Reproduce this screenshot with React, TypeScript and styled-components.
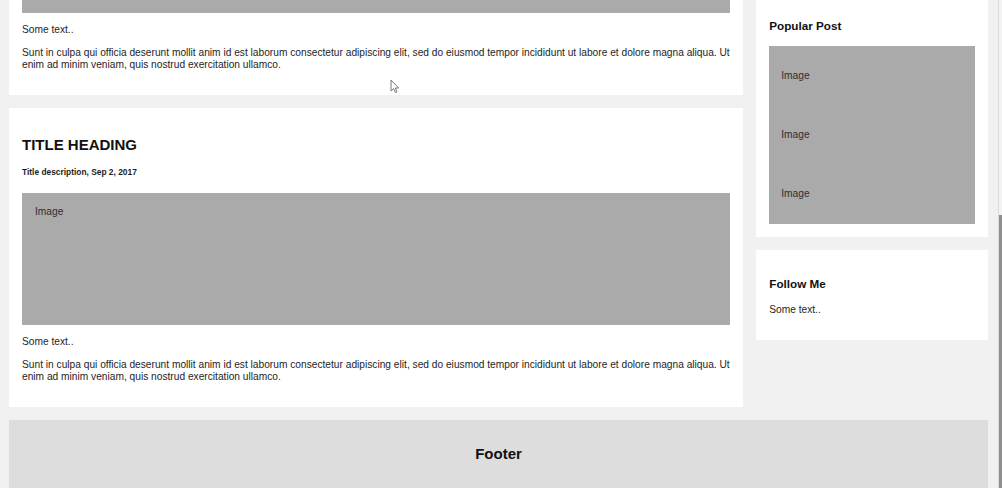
import styled, { createGlobalStyle } from 'styled-components';

const GlobalStyle = createGlobalStyle`
    html, body {
        margin: 0;
        height: 100%;
    }
    body {
        background: #f1f1f1;
        font-family: "Liberation Sans", Arial, sans-serif;
        color: #222;
    }
    #root {
        height: 100%;
    }
`;

const LOREM =
    'Sunt in culpa qui officia deserunt mollit anim id est laborum consectetur adipiscing elit, sed do eiusmod tempor incididunt ut labore et dolore magna aliqua. Ut enim ad minim veniam, quis nostrud exercitation ullamco.';

const posts = [
    { id: 0, date: 'Dec 7, 2017' },
    { id: 1, date: 'Sep 2, 2017' },
];

const Cursor = () => (
    <CursorMark width="10" height="15" viewBox="0 0 10 15">
        <path d="M1 1 L1 12 L3.6 9.6 L5.4 13.6 L7 12.9 L5.3 9 L8.7 9 Z" fill="#fff" stroke="#777" strokeWidth="1" strokeLinejoin="round" />
    </CursorMark>
);

const App = () => {
    return (
        <>
            <GlobalStyle />
            <Screen>
                <Viewport>
                    <Page>
                        <Row>
                            <LeftColumn>
                                {posts.map((post) => (
                                    <Card key={post.id}>
                                        <Title>TITLE HEADING</Title>
                                        <Meta>Title description, {post.date}</Meta>
                                        <FakeImg $height={132}>Image</FakeImg>
                                        <Text>Some text..</Text>
                                        <Text>{LOREM}</Text>
                                    </Card>
                                ))}
                            </LeftColumn>
                            <RightColumn>
                                <Card>
                                    <Title>About Me</Title>
                                    <FakeImg $height={65}>Image</FakeImg>
                                    <Text>Some text about me in culpa qui officia deserunt mollit anim..</Text>
                                </Card>
                                <Card>
                                    <SideTitle>Popular Post</SideTitle>
                                    {[0, 1, 2].map((i) => (
                                        <SideImg key={i}>
                                            <ImgLabel>Image</ImgLabel>
                                        </SideImg>
                                    ))}
                                </Card>
                                <Card>
                                    <SideTitle>Follow Me</SideTitle>
                                    <Text>Some text..</Text>
                                </Card>
                            </RightColumn>
                        </Row>
                        <Footer>
                            <FooterTitle>Footer</FooterTitle>
                        </Footer>
                    </Page>
                    <Cursor />
                </Viewport>
                <ScrollTrack>
                    <ScrollThumb />
                </ScrollTrack>
            </Screen>
        </>
    );
};
export default App;

const Screen = styled.div`
    display: flex;
    height: 100vh;
    overflow: hidden;
`;
const Viewport = styled.div`
    position: relative;
    flex: 1;
    min-width: 0;
    display: flex;
    flex-direction: column;
    justify-content: flex-end;
    overflow: hidden;
`;
const Page = styled.div`
    flex-shrink: 0;
    padding: 0 10px 0 9px;
`;
const Row = styled.div`
    display: flex;
    align-items: flex-start;
`;
const LeftColumn = styled.div`
    width: 75%;
`;
const RightColumn = styled.div`
    width: 25%;
    padding-left: 13px;
    box-sizing: border-box;
`;
const Card = styled.div`
    background: #fff;
    padding: 13px;
    margin-top: 13px;
`;
const Title = styled.h2`
    font-size: 15px;
    line-height: 17px;
    font-weight: bold;
    color: #111;
    margin: 15px 0 14px;
`;
const Meta = styled.h5`
    font-size: 8.4px;
    line-height: 10px;
    font-weight: bold;
    color: #1e1e1e;
    margin: 0 0 16px;
`;
const FakeImg = styled.div<{ $height: number }>`
    background: #aaa;
    box-sizing: border-box;
    height: ${(p) => p.$height}px;
    padding: 13px;
    font-size: 10.2px;
    line-height: 12px;
    color: #2e2e2e;
`;
const Text = styled.p`
    font-size: 10.2px;
    line-height: 12px;
    margin: 11px 0;
    color: #1e1e1e;
`;
const SideTitle = styled.h3`
    font-size: 11.7px;
    line-height: 14px;
    font-weight: bold;
    color: #111;
    margin: 14px 0 13px;
`;
const SideImg = styled.div`
    background: #aaa;
    padding: 0 12px;
    overflow: hidden;
`;
const ImgLabel = styled.p`
    font-size: 10.2px;
    line-height: 12px;
    color: #2e2e2e;
    margin: 23.67px 0;
`;
const Footer = styled.footer`
    margin-top: 13px;
    padding: 13px;
    background: #ddd;
    text-align: center;
`;
const FooterTitle = styled.h2`
    font-size: 15px;
    line-height: 17px;
    font-weight: bold;
    color: #111;
    margin: 12px 0 13px;
`;
const ScrollTrack = styled.div`
    width: 4px;
    flex-shrink: 0;
    display: flex;
    flex-direction: column;
    justify-content: flex-end;
    background: #f3f3f3;
    border-left: 1px solid #dadada;
    box-sizing: border-box;
`;
const ScrollThumb = styled.div`
    height: 56%;
    background: #8f8f8f;
`;
const CursorMark = styled.svg`
    position: absolute;
    left: 390px;
    top: 79px;
`;
